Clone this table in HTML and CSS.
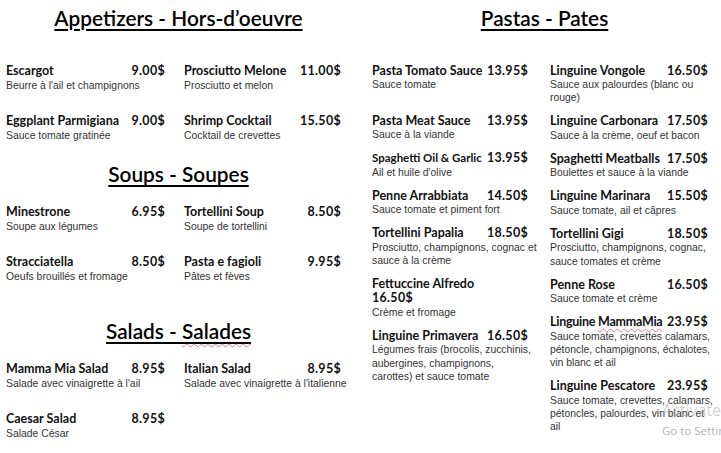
FILE: index.html
```html
<!DOCTYPE html>
<html lang="fr">
<head>
<meta charset="utf-8">
<title>Menu</title>
<link rel="stylesheet" href="styles.css">
</head>
<body>
<div class="page">
  <section class="side side-left">
    <div class="block">
      <h2 class="heading">Appetizers - Hors-d’oeuvre</h2>
      <div class="grid grid-first">
        <div class="item"><div class="line"><span class="name">Escargot</span><span class="price">9.00$</span></div><p class="desc">Beurre à l'ail et champignons</p></div>
        <div class="item"><div class="line"><span class="name">Prosciutto Melone</span><span class="price">11.00$</span></div><p class="desc">Prosciutto et melon</p></div>
        <div class="item"><div class="line"><span class="name">Eggplant Parmigiana</span><span class="price">9.00$</span></div><p class="desc">Sauce tomate gratinée</p></div>
        <div class="item"><div class="line"><span class="name">Shrimp Cocktail</span><span class="price">15.50$</span></div><p class="desc">Cocktail de crevettes</p></div>
      </div>
    </div>
    <div class="block block-soups">
      <h2 class="heading">Soups - Soupes</h2>
      <div class="grid">
        <div class="item"><div class="line"><span class="name">Minestrone</span><span class="price">6.95$</span></div><p class="desc">Soupe aux légumes</p></div>
        <div class="item"><div class="line"><span class="name">Tortellini Soup</span><span class="price">8.50$</span></div><p class="desc">Soupe de tortellini</p></div>
        <div class="item"><div class="line"><span class="name">Stracciatella</span><span class="price">8.50$</span></div><p class="desc">Oeufs brouillés et fromage</p></div>
        <div class="item"><div class="line"><span class="name">Pasta e fagioli</span><span class="price">9.95$</span></div><p class="desc">Pâtes et fèves</p></div>
      </div>
    </div>
    <div class="block block-salads">
      <h2 class="heading">Salads - <span class="spell">Salades</span></h2>
      <div class="grid">
        <div class="item"><div class="line"><span class="name">Mamma Mia Salad</span><span class="price">8.95$</span></div><p class="desc">Salade avec vinaigrette à l'ail</p></div>
        <div class="item"><div class="line"><span class="name">Italian Salad</span><span class="price">8.95$</span></div><p class="desc">Salade avec vinaigrette à l'italienne</p></div>
        <div class="item"><div class="line"><span class="name">Caesar Salad</span><span class="price">8.95$</span></div><p class="desc">Salade César</p></div>
      </div>
    </div>
  </section>

  <section class="side side-right">
    <h2 class="heading heading-pastas">Pastas - Pates</h2>
    <div class="columns">
      <div class="col">
        <div class="item item-spaced"><div class="line"><span class="name">Pasta Tomato Sauce</span><span class="price">13.95$</span></div><p class="desc">Sauce tomate</p></div>
        <div class="item"><div class="line"><span class="name">Pasta Meat Sauce</span><span class="price">13.95$</span></div><p class="desc">Sauce à la viande</p></div>
        <div class="item"><div class="line line-small"><span class="name">Spaghetti Oil &amp; Garlic</span><span class="price">13.95$</span></div><p class="desc">Ail et huile d'olive</p></div>
        <div class="item"><div class="line"><span class="name">Penne Arrabbiata</span><span class="price">14.50$</span></div><p class="desc">Sauce tomate et piment fort</p></div>
        <div class="item"><div class="line"><span class="name">Tortellini Papalia</span><span class="price">18.50$</span></div><p class="desc">Prosciutto, champignons, cognac et<br>sauce à la crème</p></div>
        <div class="item"><div class="line line-stacked"><span class="name">Fettuccine Alfredo</span><span class="price">16.50$</span></div><p class="desc">Crème et fromage</p></div>
        <div class="item"><div class="line"><span class="name">Linguine Primavera</span><span class="price">16.50$</span></div><p class="desc">Légumes frais (brocolis, zucchinis,<br>aubergines, champignons,<br>carottes) et sauce tomate</p></div>
      </div>
      <div class="col">
        <div class="item"><div class="line"><span class="name">Linguine Vongole</span><span class="price">16.50$</span></div><p class="desc">Sauce aux palourdes (blanc ou<br>rouge)</p></div>
        <div class="item"><div class="line"><span class="name">Linguine Carbonara</span><span class="price">17.50$</span></div><p class="desc">Sauce à la crème, oeuf et bacon</p></div>
        <div class="item"><div class="line"><span class="name">Spaghetti Meatballs</span><span class="price">17.50$</span></div><p class="desc">Boulettes et sauce à la viande</p></div>
        <div class="item"><div class="line"><span class="name">Linguine Marinara</span><span class="price">15.50$</span></div><p class="desc">Sauce tomate, ail et câpres</p></div>
        <div class="item"><div class="line"><span class="name">Tortellini Gigi</span><span class="price">18.50$</span></div><p class="desc">Prosciutto, champignons, cognac,<br>sauce tomates et crème</p></div>
        <div class="item"><div class="line"><span class="name">Penne Rose</span><span class="price">16.50$</span></div><p class="desc">Sauce tomate et crème</p></div>
        <div class="item"><div class="line line-tight"><span class="name">Linguine <span class="spell">MammaMia</span></span><span class="price">23.95$</span></div><p class="desc">Sauce tomate, crevettes calamars,<br>pétoncle, champignons, échalotes,<br>vin blanc et ail</p></div>
        <div class="item"><div class="line"><span class="name">Linguine Pescatore</span><span class="price">23.95$</span></div><p class="desc">Sauce tomate, crevettes, calamars,<br>pétoncles, palourdes, vin blanc et<br>ail</p></div>
      </div>
    </div>
  </section>
</div>

<div class="watermark">menupix</div>
<div class="activate">
  <div class="activate-title">Activate Windows</div>
  <div class="activate-sub">Go to Settings to activate Windows.</div>
</div>
</body>
</html>
```

FILE: styles.css
```css
* {
  box-sizing: border-box;
  margin: 0;
  padding: 0;
}

html, body {
  background: #fff;
}

body {
  width: 721px;
  height: 453px;
  overflow: hidden;
  position: relative;
  font-family: "Liberation Sans", Arial, sans-serif;
  color: #000;
}

.page {
  display: grid;
  grid-template-columns: 357px 364px;
}

.side {
  padding-top: 6px;
}

.heading {
  font-family: Lato, "Open Sans", sans-serif;
  font-weight: 600;
  font-size: 20.8px;
  line-height: 24px;
  text-align: center;
  color: #000;
  text-decoration: underline;
  text-decoration-thickness: 1.5px;
  text-underline-offset: 3px;
}

.heading-pastas {
  padding-left: 11px;
}

.block-soups {
  margin-top: 20.5px;
}

.block-salads {
  margin-top: 36.5px;
}

.grid {
  display: grid;
  grid-template-columns: 159px 157px;
  column-gap: 19px;
  row-gap: 22.3px;
  padding-left: 6px;
  margin-top: 19px;
}

.grid-first {
  margin-top: 34px;
}

.line {
  display: flex;
  justify-content: space-between;
  align-items: baseline;
  font-family: Lato, "Open Sans", sans-serif;
  font-weight: 700;
  font-size: 12.5px;
  line-height: 14.5px;
  color: #111;
  white-space: nowrap;
}

.line-small {
  font-size: 11.5px;
}

.line-small .price {
  font-size: 12.5px;
}

.line-tight .name {
  letter-spacing: -0.25px;
}

.line-stacked {
  flex-direction: column;
  align-items: flex-start;
}

.price {
  letter-spacing: 0.3px;
}

.desc {
  font-size: 10.4px;
  line-height: 13.2px;
  color: #333;
  white-space: nowrap;
}

.columns {
  display: grid;
  grid-template-columns: 156px 158px;
  column-gap: 22px;
  padding-left: 15px;
  margin-top: 33.75px;
}

.col {
  display: flex;
  flex-direction: column;
  gap: 9.8px;
}

.item-spaced {
  padding-bottom: 12.5px;
}

.spell {
  text-decoration: underline wavy #e07a8a;
  text-decoration-thickness: 1px;
  text-underline-offset: 2px;
}

.heading .spell {
  text-underline-offset: 4px;
}

.watermark {
  position: absolute;
  left: 458px;
  top: 340px;
  font-family: "Open Sans", sans-serif;
  font-weight: 300;
  font-size: 38px;
  line-height: 40px;
  color: #e2e2e2;
  z-index: -1;
  letter-spacing: 0.5px;
}

.activate {
  position: absolute;
  left: 662px;
  top: 400px;
  white-space: nowrap;
  font-family: "Open Sans", sans-serif;
  color: #b4b4b4;
}

.activate-title {
  font-size: 16px;
  line-height: 20px;
  color: rgba(170, 170, 170, 0.55);
}

.activate-sub {
  font-size: 11.5px;
  line-height: 16px;
  margin-top: 3px;
}
```
